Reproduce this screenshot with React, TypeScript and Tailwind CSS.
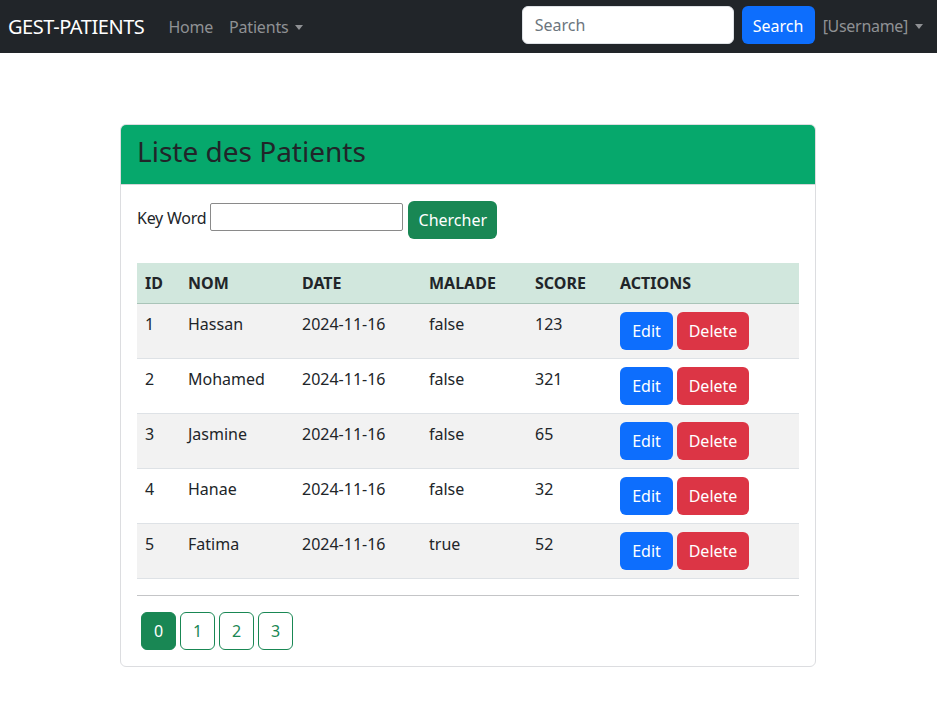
import React from "react";

const patients = [
  { id: 1, nom: "Hassan", date: "2024-11-16", malade: "false", score: 123 },
  { id: 2, nom: "Mohamed", date: "2024-11-16", malade: "false", score: 321 },
  { id: 3, nom: "Jasmine", date: "2024-11-16", malade: "false", score: 65 },
  { id: 4, nom: "Hanae", date: "2024-11-16", malade: "false", score: 32 },
  { id: 5, nom: "Fatima", date: "2024-11-16", malade: "true", score: 52 },
];

function Caret() {
  return (
    <span className="inline-block ml-[7px] w-0 h-0 border-t-[5px] border-t-current border-x-[4.5px] border-x-transparent" />
  );
}

export default function App() {
  return (
    <div className="min-h-[726px] bg-white text-[#212529] text-[16px] leading-[1.5]" style={{ fontFamily: '"Noto Sans", "Segoe UI", sans-serif' }}>
      <nav className="h-[53px] bg-[#212529] flex items-start pl-2 pr-[6px]">
        <div className="text-white text-[20px] mr-4 leading-[30px] mt-[12px] tracking-[-0.45px]">GEST-PATIENTS</div>
        <div className="flex items-center text-[#8f9194] mt-[15px] tracking-[-0.2px]">
          <span className="px-2">Home</span>
          <span className="px-2 flex items-center">Patients<Caret /></span>
        </div>
        <div className="ml-auto flex items-center mt-[6px]">
          <input
            className="w-[212px] h-[38px] rounded-[6px] border border-[#dee2e6] bg-white px-3 text-[16px] text-[#212529] placeholder:text-[#6c757d] outline-none"
            placeholder="Search"
          />
          <button className="ml-2 h-[38px] w-[73px] pt-[1px] rounded-[6px] bg-[#0d6efd] text-white">Search</button>
          <span className="px-2 pt-[2px] flex items-center text-[#8f9194] tracking-[-0.3px]">[Username]<Caret /></span>
        </div>
      </nav>

      <div className="pt-[71px] pl-[120px]">
        <div className="w-[696px] border border-[#dcdde0] rounded-[6px] overflow-hidden">
          <div className="h-[60px] bg-[#06a86c] border-b border-[#d4d6d8] px-4 flex items-center">
            <h3 className="text-[28px] leading-[1.2] text-[#212529] pb-[5px]">Liste des Patients</h3>
          </div>
          <div className="p-4">
            <div className="flex items-start">
              <label className="mr-[4px] mt-[5px] tracking-[-0.25px]">Key Word</label>
              <input className="w-[193px] h-[28px] mt-[2px] border border-[#8a8a8a] rounded-[2px] px-1 outline-none" />
              <button className="ml-[5px] h-[38px] w-[89px] rounded-[6px] bg-[#198754] text-white">Chercher</button>
            </div>
            <table className="mt-6 w-[662px] table-fixed border-collapse">
              <colgroup>
                <col className="w-[43px]" />
                <col className="w-[114px]" />
                <col className="w-[127px]" />
                <col className="w-[106px]" />
                <col className="w-[85px]" />
                <col className="w-[187px]" />
              </colgroup>
              <thead>
                <tr className="bg-[#d1e7dd] border-b border-[#a9c4b8] text-left">
                  <th className="px-2 py-2 font-bold">ID</th>
                  <th className="px-2 py-2 font-bold">NOM</th>
                  <th className="px-2 py-2 font-bold">DATE</th>
                  <th className="px-2 py-2 font-bold">MALADE</th>
                  <th className="px-2 py-2 font-bold">SCORE</th>
                  <th className="px-2 py-2 font-bold">ACTIONS</th>
                </tr>
              </thead>
              <tbody>
                {patients.map((p, i) => (
                  <tr key={p.id} className={`border-b border-[#dee2e6] ${i % 2 === 0 ? "bg-[#f2f2f2]" : "bg-white"}`}>
                    <td className="px-2 py-2 align-top">{p.id}</td>
                    <td className="px-2 py-2 align-top">{p.nom}</td>
                    <td className="px-2 py-2 align-top">{p.date}</td>
                    <td className="px-2 py-2 align-top">{p.malade}</td>
                    <td className="px-2 py-2 align-top">{p.score}</td>
                    <td className="px-2 py-2 align-top">
                      <div className="flex gap-[4px]">
                        <button className="h-[38px] w-[53px] rounded-[6px] bg-[#0d6efd] text-white">Edit</button>
                        <button className="h-[38px] w-[72px] rounded-[6px] bg-[#dc3545] text-white">Delete</button>
                      </div>
                    </td>
                  </tr>
                ))}
              </tbody>
            </table>
            <hr className="mt-4 border-t border-[#c4c5c7]" />
            <div className="mt-4 flex gap-[4px] pl-[4px]">
              {[0, 1, 2, 3].map((n) => (
                <button
                  key={n}
                  className={`h-[38px] w-[35px] rounded-[6px] border border-[#198754] ${n === 0 ? "bg-[#198754] text-white" : "bg-white text-[#198754]"}`}
                >
                  {n}
                </button>
              ))}
            </div>
          </div>
        </div>
      </div>
    </div>
  );
}
